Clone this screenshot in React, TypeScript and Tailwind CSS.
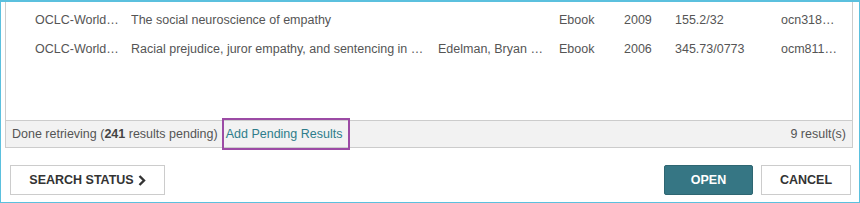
import React from "react";

type Row = {
  source: string;
  title: string;
  author: string;
  format: string;
  year: string;
  klass: string;
  id: string;
};

const rows: Row[] = [
  {
    source: "OCLC-WorldCat",
    title: "The social neuroscience of empathy",
    author: "",
    format: "Ebook",
    year: "2009",
    klass: "155.2/32",
    id: "ocn318279841",
  },
  {
    source: "OCLC-WorldCat",
    title: "Racial prejudice, juror empathy, and sentencing in death penalty cases",
    author: "Edelman, Bryan Lee",
    format: "Ebook",
    year: "2006",
    klass: "345.73/0773",
    id: "ocm81150532",
  },
];

const cell = "truncate pr-3";

export default function App() {
  return (
    <div
      className="w-[860px] h-[203px] border border-t-2 border-[#5bc0de] bg-white text-[12.5px] text-[#555]"
      style={{ fontFamily: '"Liberation Sans", Arial, sans-serif' }}
    >
      <div className="flex flex-col h-full pl-[4px] pr-[6px]">
        {/* results table */}
        <div className="h-[146px] flex flex-col border-x border-b border-[#ccc]">
          <div className="flex-1 pt-[4px]">
            {rows.map((r) => (
              <div
                key={r.id}
                className="grid grid-cols-[29px_96px_307px_121px_65px_51px_106px_57px] h-[29px] items-center"
              >
                <div />
                <div className={cell}>{r.source}</div>
                <div className={cell}>{r.title}</div>
                <div className={cell}>{r.author}</div>
                <div className={cell}>{r.format}</div>
                <div className={cell}>{r.year}</div>
                <div className={cell}>{r.klass}</div>
                <div className="truncate">{r.id}</div>
              </div>
            ))}
          </div>
          <div className="h-[27px] flex items-center justify-between bg-[#f2f2f2] border-t border-[#ccc] pl-[6px] pr-[6px]">
            <div className="flex items-center">
              <span>
                Done retrieving (<b className="text-[#444]">241</b> results pending)
              </span>
              <span className="ml-[4px] -my-[5px] pl-[2px] pr-[6px] py-[5px] border-2 border-[#9c4ba5] text-[#2e7d8b] leading-[18px]">
                Add Pending Results
              </span>
            </div>
            <span>9 result(s)</span>
          </div>
        </div>

        {/* buttons */}
        <div className="flex items-center justify-between pt-[17px] pl-[5px] pr-[2px]">
          <button className="h-[30px] w-[155px] border border-[#ccc] bg-white font-bold text-[12.5px] text-[#333] flex items-center justify-center gap-[4px]">
            SEARCH STATUS
            <svg width="8" height="11" viewBox="0 0 8 11">
              <path d="M1.5 1 L6 5.5 L1.5 10" fill="none" stroke="#333" strokeWidth="2.4" />
            </svg>
          </button>
          <div className="flex gap-[8px]">
            <button className="h-[30px] w-[89px] rounded-[2px] bg-[#367684] border border-[#2e6672] font-bold text-[12.5px] text-white">
              OPEN
            </button>
            <button className="h-[30px] w-[90px] border border-[#ccc] bg-white font-bold text-[12.5px] text-[#333]">
              CANCEL
            </button>
          </div>
        </div>
      </div>
    </div>
  );
}
